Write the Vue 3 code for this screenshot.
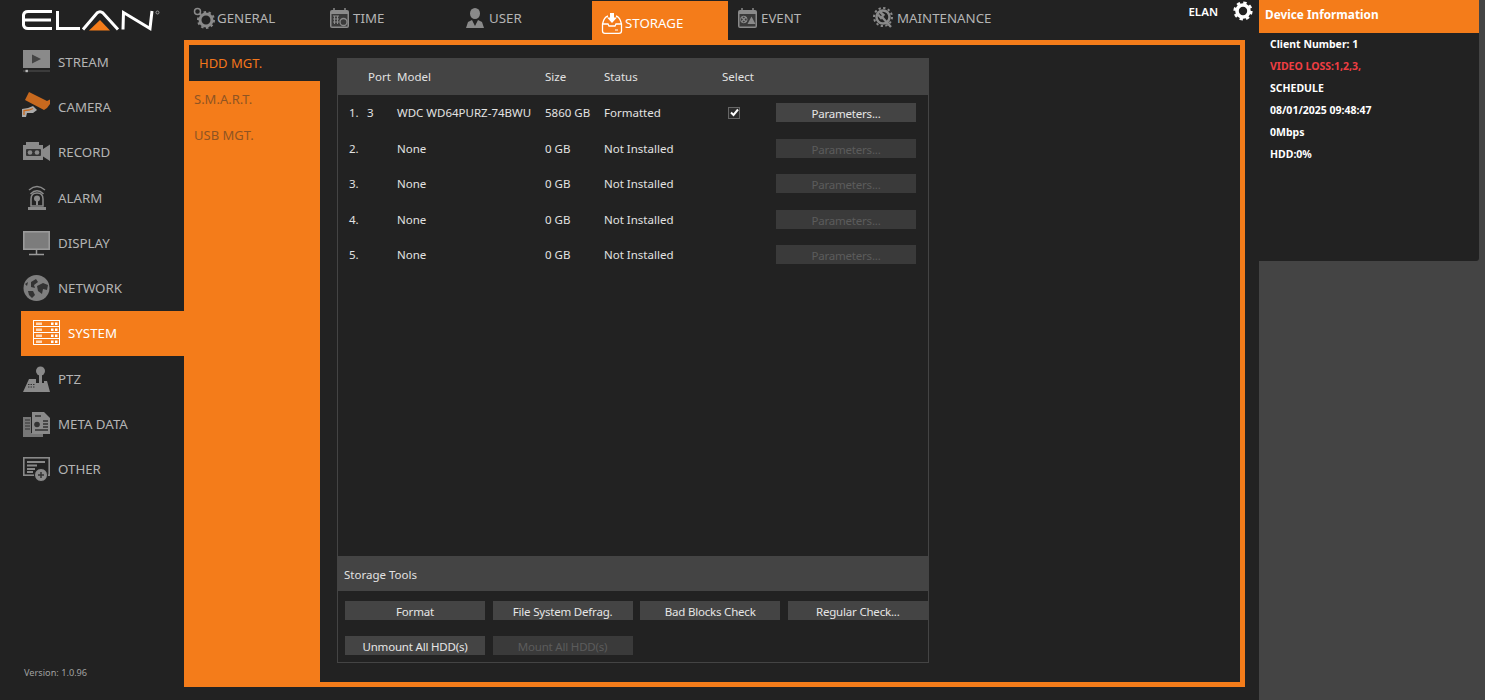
<template>
  <div class="app">
    <!-- left menu -->
    <aside class="sidebar">
      <svg class="logo" width="146" height="26" viewBox="0 0 146 26" fill="none" stroke="#fff">
        <path d="M32 3.500H8Q4 3.500 3.500 7V17Q4 20.500 8 20.500H32M5 12H31" stroke-width="3" />
        <path d="M37.500 3V20.500H60" stroke-width="3" />
        <path d="M63 21.500L77 5Q80 2.500 83 5L98 21.500" stroke-width="3" />
        <path d="M69 22.500L80 12L90 22.500Z" fill="#f47c1a" stroke="none" />
        <path d="M103 21.500L103.500 4.500L130 20.500L132 3" stroke-width="3" />
        <circle cx="137.500" cy="4.500" r="1.500" stroke="#999" stroke-width="1" />
      </svg>

      <nav class="menu">
        <a
          v-for="item in menu"
          :key="item.label"
          class="menu-item"
          :class="{ active: item.label === 'SYSTEM' }"
        >
          <svg class="menu-icon" width="28" height="28" viewBox="0 0 28 28" v-html="item.icon"></svg>
          <span>{{ item.label }}</span>
        </a>
      </nav>

      <div class="version">Version: 1.0.96</div>
    </aside>

    <main class="main">
      <!-- top tabs -->
      <header class="topbar">
        <a v-for="tab in tabs" :key="tab.label" class="tab" :class="{ active: tab.label === 'STORAGE' }">
          <svg width="22" height="22" viewBox="0 0 22 22" v-html="tab.icon"></svg>
          <span>{{ tab.label }}</span>
        </a>
        <div class="user">
          <span>ELAN</span>
          <svg width="20" height="20" viewBox="0 0 20 20">
            <circle cx="10" cy="10" r="6" fill="none" stroke="#fff" stroke-width="3.600" />
            <circle cx="10" cy="10" r="8.200" fill="none" stroke="#fff" stroke-width="2.800" stroke-dasharray="3.300 3.140" />
          </svg>
        </div>
      </header>

      <div class="frame">
        <ul class="subnav">
          <li v-for="sub in subTabs" :key="sub" :class="{ current: sub === 'HDD MGT.' }">{{ sub }}</li>
        </ul>

        <section class="content">
          <div class="hdd-box">
            <div class="row head">
              <span></span>
              <span class="port-head">Port</span>
              <span>Model</span>
              <span>Size</span>
              <span>Status</span>
              <span>Select</span>
              <span></span>
            </div>

            <div v-for="(disk, i) in disks" :key="i" class="row">
              <span>{{ i + 1 }}.</span>
              <span>{{ disk.port }}</span>
              <span>{{ disk.model }}</span>
              <span>{{ disk.size }}</span>
              <span>{{ disk.status }}</span>
              <span class="select-cell">
                <span v-if="disk.selected" class="check">
                  <svg width="9" height="9" viewBox="0 0 9 9" fill="none" stroke="#fff" stroke-width="2">
                    <path d="M1 4.500L3.500 7L8 1.500" />
                  </svg>
                </span>
              </span>
              <button class="btn" :class="{ disabled: !disk.selected }">Parameters...</button>
            </div>

            <div class="tools-title">Storage Tools</div>
            <div class="tools">
              <button class="btn">Format</button>
              <button class="btn">File System Defrag.</button>
              <button class="btn">Bad Blocks Check</button>
              <button class="btn">Regular Check...</button>
              <button class="btn">Unmount All HDD(s)</button>
              <button class="btn disabled">Mount All HDD(s)</button>
            </div>
          </div>
        </section>
      </div>
    </main>

    <!-- device info -->
    <aside class="side">
      <div class="info">
        <div class="info-title">Device Information</div>
        <div class="info-body">
          <p>Client Number: 1</p>
          <p class="loss">VIDEO LOSS:1,2,3,</p>
          <p>SCHEDULE</p>
          <p>08/01/2025 09:48:47</p>
          <p>0Mbps</p>
          <p>HDD:0%</p>
        </div>
      </div>
    </aside>
  </div>
</template>

<script setup>
const G = '#8a8a8a'
const D = '#222'

const menu = [
  {
    label: 'STREAM',
    icon: `<rect x="0" y="2" width="27" height="18" fill="${G}"/><path d="M9 6.500L18 11L9 15.500Z" fill="#444"/>
      <path d="M0 23H27" stroke="#444" stroke-width="1.500"/><rect x="2.500" y="21.800" width="2.400" height="2.400" fill="#bbb"/>`
  },
  {
    label: 'CAMERA',
    icon: `<path d="M6 -1L24 8L27 6.500L27 11L24 15L21 17L2 7Z" fill="#c8691e"/>
      <path d="M-1 24V16L5 15L10 13L14 17L10 20L4 20L3 24Z" fill="#aaa"/><path d="M1 22V17.500L6 17L10 15.500" stroke="#c8691e" fill="none" stroke-width="1.300"/>`
  },
  {
    label: 'RECORD',
    icon: `<path d="M3 7V4H16V7H20V11L27 6.500V23L20 18.500V22H0V7Z" fill="${G}"/>
      <rect x="3" y="11" width="15" height="7" rx="1" fill="#333"/><circle cx="7" cy="14.500" r="2.300" fill="${G}"/><circle cx="14" cy="14.500" r="2.300" fill="${G}"/>`
  },
  {
    label: 'ALARM',
    icon: `<g fill="none" stroke="${G}" stroke-width="1.500"><path d="M6 6Q14 -1 22 6"/><path d="M7.500 10Q14 3.500 20.500 10"/><path d="M8 22V15Q8 9 14 9Q20 9 20 15V22Z"/></g>
      <circle cx="14" cy="14.500" r="3" fill="${G}"/><rect x="13" y="15" width="2" height="6" fill="${G}"/><rect x="5" y="23" width="18" height="3" fill="${G}"/>`
  },
  {
    label: 'DISPLAY',
    icon: `<rect x="0.800" y="2.800" width="25.400" height="17.400" fill="#7c7c7c" stroke="#9a9a9a" stroke-width="1.600"/>
      <path d="M13.500 21V25M6 25.500H21" stroke="#9a9a9a" stroke-width="1.500"/>`
  },
  {
    label: 'NETWORK',
    icon: `<circle cx="13.500" cy="14" r="13" fill="#7f7f7f"/><path d="M8 8L13 5L15 8L11 11L12 14L8 13ZM14 12L20 9L25 11L24 16L20 15L19 20L15 17ZM5 17L10 17L12 21L9 24L6 21ZM2 10L5 8L4 12Z" fill="#333"/>`
  },
  {
    label: 'SYSTEM',
    icon: `<g fill="none" stroke="#fff" stroke-width="1"><rect x="1.500" y="1.500" width="26" height="24"/><path d="M1.500 7.500H27.500M1.500 13.500H27.500M1.500 19.500H27.500"/></g>
      <path d="M4 3.500H10V6H4ZM4 9.500H10V12H4ZM4 15.500H10V18H4ZM4 21.500H10V24H4Z" fill="#ffd9b8"/>
      <path d="M19 3.500H21.500V6H19ZM23 3.500H25.500V6H23ZM19 9.500H21.500V12H19ZM23 9.500H25.500V12H23ZM19 15.500H21.500V18H19ZM23 15.500H25.500V18H23ZM19 21.500H21.500V24H19ZM23 21.500H25.500V24H23Z" fill="#fff"/>`
  },
  {
    label: 'PTZ',
    icon: `<circle cx="17.500" cy="6" r="4.500" fill="${G}"/><rect x="16" y="9" width="3" height="9" fill="${G}"/>
      <path d="M6 14H13V18H21V16H24L27 27H0Z" fill="${G}"/><path d="M5 19.500H12M5 22H12" stroke="#333" stroke-width="1" stroke-dasharray="1.500 1"/>`
  },
  {
    label: 'META DATA',
    icon: `<path d="M0 7H8V23H20V27H0Z" fill="#777"/><path d="M9 2H21L27 8V24H9Z" fill="${G}"/><path d="M2 10H7M2 13H7M2 16H7M2 19H7" stroke="#333"/>
      <circle cx="14" cy="14.500" r="2.800" fill="#333"/><path d="M12 6H18M20 11H25M20 14H25M20 17H25M12 20H25" stroke="#333" stroke-width="1.500"/>`
  },
  {
    label: 'OTHER',
    icon: `<rect x="0.800" y="2.800" width="25.400" height="17.400" fill="none" stroke="${G}" stroke-width="1.600"/>
      <path d="M4 7H22M4 10.500H14M4 14H12M4 17H10" stroke="${G}" stroke-width="1.800"/><circle cx="18" cy="20" r="6.500" fill="${G}" stroke="${D}"/><path d="M15 20H21M18 17V23" stroke="#333" stroke-width="1.500"/>`
  }
]

const clockCalendar = `<rect x="1" y="3" width="19" height="18" rx="2" fill="${G}"/><rect x="2.500" y="7" width="16" height="12.500" fill="#3a3a3a"/>
  <path d="M5 1V5M16 1V5" stroke="${G}" stroke-width="1.500"/>`

const tabs = [
  {
    label: 'GENERAL',
    icon: `<circle cx="4.500" cy="4.500" r="3" fill="none" stroke="${G}" stroke-width="1.500"/>
      <circle cx="13" cy="13" r="6" fill="none" stroke="${G}" stroke-width="3"/>
      <circle cx="13" cy="13" r="8" fill="none" stroke="${G}" stroke-width="2" stroke-dasharray="2.500 2.500"/>`
  },
  {
    label: 'TIME',
    icon: `${clockCalendar}<path d="M4 9H10M4 12H10M4 15H10M5.500 9V17M8.500 9V17" stroke="${G}"/><circle cx="14.500" cy="15" r="3.500" fill="none" stroke="${G}" stroke-width="1.300"/>`
  },
  {
    label: 'USER',
    icon: `<ellipse cx="10" cy="6.500" rx="5" ry="5.500" fill="${G}"/><path d="M1 21L3 15L7 13L10 19L13 13L17 15L19 21Z" fill="${G}"/>`
  },
  {
    label: 'STORAGE',
    icon: `<path d="M7 4Q3 5 1.500 12V19Q1.500 21.300 4 21.300H18Q20.500 21.300 20.500 19V12Q19 5 15 4M2 12H7L8 14H14L15 12H20" fill="none" stroke="#fff" stroke-width="1.300"/>
      <path d="M9 1H13V5.500H16L11 11L6 5.500H9Z" fill="#fff"/><path d="M14 18H17" stroke="#fff"/>`
  },
  {
    label: 'EVENT',
    icon: `${clockCalendar}<path d="M4.500 10L9 15M9 10L4.500 15" stroke="${G}" stroke-width="1.200"/><circle cx="6.800" cy="12.500" r="3.300" fill="none" stroke="${G}"/><path d="M14.500 9.500L18.500 17H10.500Z" fill="${G}"/>`
  },
  {
    label: 'MAINTENANCE',
    icon: `<circle cx="10" cy="10" r="6.500" fill="none" stroke="${G}" stroke-width="2.500"/><circle cx="10" cy="10" r="9" fill="none" stroke="${G}" stroke-width="2" stroke-dasharray="2.300 2.400"/>
      <path d="M7 5L10.500 8L8 11L5 7.500M9 10L18 20" fill="none" stroke="${G}" stroke-width="2.400"/>`
  }
]

const subTabs = ['HDD MGT.', 'S.M.A.R.T.', 'USB MGT.']

const disks = [
  { port: '3', model: 'WDC WD64PURZ-74BWU', size: '5860 GB', status: 'Formatted', selected: true },
  { port: '', model: 'None', size: '0 GB', status: 'Not Installed', selected: false },
  { port: '', model: 'None', size: '0 GB', status: 'Not Installed', selected: false },
  { port: '', model: 'None', size: '0 GB', status: 'Not Installed', selected: false },
  { port: '', model: 'None', size: '0 GB', status: 'Not Installed', selected: false }
]
</script>

<style scoped>
.app {
  display: flex;
  height: 700px;
  background: #222;
  font-family: "Noto Sans", "Open Sans", sans-serif;
  overflow: hidden;
}

/* left menu */
.sidebar {
  width: 184px;
  flex-shrink: 0;
  display: flex;
  flex-direction: column;
}

.logo {
  display: block;
  margin: 8px 0 5px 20px;
}

.menu {
  display: flex;
  flex-direction: column;
}

.menu-item {
  display: flex;
  align-items: center;
  gap: 7px;
  height: 45.300px;
  margin-left: 21px;
  padding-left: 2px;
  font-size: 13.300px;
  color: #b4b4b4;
}

.menu-item.active {
  gap: 8px;
  padding-left: 11px;
  background: #f47c1a;
  color: #fff;
}

.menu-icon {
  overflow: visible;
}

.version {
  margin-top: auto;
  padding: 0 0 21px 24px;
  font-size: 9.200px;
  color: #a0a0a0;
}

/* main area */
.main {
  width: 1075px;
  flex-shrink: 0;
}

.topbar {
  display: flex;
  height: 40px;
}

.tab {
  display: flex;
  align-items: center;
  gap: 2px;
  width: 136px;
  padding: 0 0 5px 9px;
  box-sizing: border-box;
  font-size: 13.300px;
  color: #b4b4b4;
}

.tab.active {
  margin-top: 1px;
  padding-top: 5px;
  padding-bottom: 0;
  background: #f47c1a;
  color: #fff;
}

.user {
  display: flex;
  align-items: flex-start;
  gap: 15px;
  margin-left: auto;
  padding: 1px 6px 0 0;
  font-size: 11.500px;
  font-weight: 600;
  color: #fff;
}

.user span {
  padding-top: 3px;
}

.frame {
  display: flex;
  width: 1061px;
  height: 647px;
  box-sizing: border-box;
  border: 5px solid #f47c1a;
  background: #f47c1a;
}

.subnav {
  width: 131px;
  margin: 0;
  padding: 0;
  list-style: none;
  flex-shrink: 0;
}

.subnav li {
  height: 36px;
  line-height: 36px;
  padding-left: 5px;
  font-size: 13px;
  color: #8f5423;
}

.subnav li.current {
  padding-left: 10px;
  background: #222;
  color: #f4761a;
}

.content {
  flex: 1;
  padding: 13px 0 19px 17px;
  background: #222;
}

.hdd-box {
  display: flex;
  flex-direction: column;
  width: 592px;
  height: 605px;
  box-sizing: border-box;
  border: 1px solid #444;
}

.row {
  display: grid;
  grid-template-columns: 18px 30px 148px 59px 118px 54px 140px;
  align-items: center;
  height: 35.500px;
  padding-left: 11px;
  font-size: 11.500px;
  color: #e2e2e2;
}

.row.head {
  height: 36px;
  padding-bottom: 1px;
  box-sizing: border-box;
  flex-shrink: 0;
  background: #444;
}

.port-head {
  margin-left: 1px;
}

.select-cell {
  display: flex;
  padding-left: 6px;
}

.check {
  display: flex;
  align-items: center;
  justify-content: center;
  width: 10px;
  height: 10px;
  border: 1px solid #666;
  background: #2c2c2c;
}

.btn {
  height: 19px;
  padding: 2px 0 0;
  border: none;
  background: #444;
  font-family: inherit;
  font-size: 11.500px;
  letter-spacing: -0.200px;
  line-height: 17px;
  color: #e6e6e6;
}

.btn.disabled {
  background: #3a3a3a;
  color: #5c5c5c;
}

.tools-title {
  display: flex;
  align-items: center;
  height: 35px;
  margin-top: auto;
  padding: 2px 0 0 6px;
  box-sizing: border-box;
  background: #444;
  font-size: 11.500px;
  color: #e2e2e2;
}

.tools {
  display: grid;
  grid-template-columns: repeat(4, 140px);
  gap: 16px 7.600px;
  padding: 10px 0 7px 7px;
}

/* device info */
.side {
  flex: 1;
  background: #444;
}

.info {
  width: 220px;
  height: 261px;
  background: #222;
  border-bottom-right-radius: 3px;
}

.info-title {
  height: 33px;
  line-height: 29px;
  padding-left: 6px;
  background: #f47c1a;
  font-size: 11.800px;
  font-weight: 700;
  color: #fff;
}

.info-body {
  padding: 0 11px;
}

.info-body p {
  margin: 0;
  height: 22px;
  line-height: 22px;
  font-size: 10.500px;
  font-weight: 700;
  color: #fff;
}

.info-body .loss {
  color: #ef3e42;
}
</style>

<style>
html,
body {
  margin: 0;
  background: #222;
}
</style>
